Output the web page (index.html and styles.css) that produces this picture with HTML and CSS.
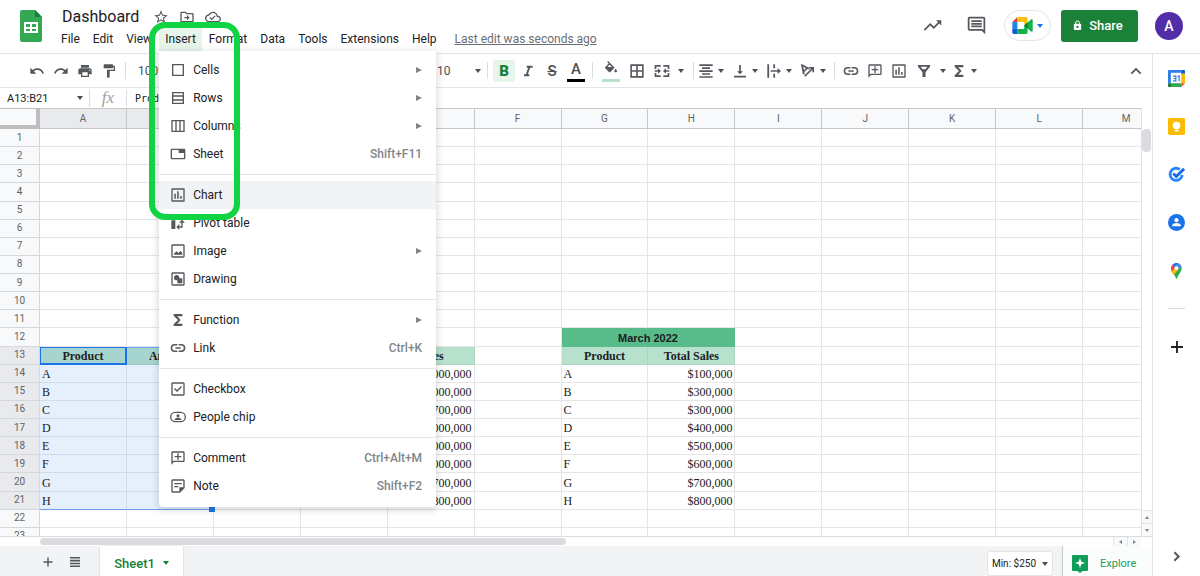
FILE: index.html
```html
<!DOCTYPE html>
<html lang="en">
<head>
<meta charset="utf-8">
<title>Dashboard</title>
<link rel="stylesheet" href="styles.css">
</head>
<body>
<svg class="sprite" aria-hidden="true">
  <symbol id="i-star" viewBox="0 0 24 24"><path d="M22 9.24l-7.19-.62L12 2 9.19 8.63 2 9.24l5.46 4.73L5.82 21 12 17.27 18.18 21l-1.63-7.03L22 9.24zM12 15.4l-3.76 2.27 1-4.28-3.32-2.88 4.38-.38L12 6.1l1.71 4.04 4.38.38-3.32 2.88 1 4.28L12 15.4z"/></symbol>
  <symbol id="i-folder" viewBox="0 0 24 24"><path d="M20 6h-8l-2-2H4c-1.100 0-2 .9-2 2v12c0 1.100.9 2 2 2h16c1.100 0 2-.9 2-2V8c0-1.100-.9-2-2-2zm0 12H4V6h5.200l2 2H20v10zm-8-1l4-4-4-4v3H8v2h4v3z"/></symbol>
  <symbol id="i-cloud" viewBox="0 0 24 24"><path d="M19.350 10.040C18.670 6.590 15.640 4 12 4 9.110 4 6.600 5.640 5.350 8.040 2.340 8.360 0 10.910 0 14c0 3.310 2.690 6 6 6h13c2.760 0 5-2.240 5-5 0-2.640-2.050-4.780-4.650-4.960zM19 18H6c-2.210 0-4-1.790-4-4 0-2.050 1.530-3.760 3.560-3.970l1.070-.11.5-.95C8.080 7.140 9.940 6 12 6c2.620 0 4.880 1.860 5.390 4.430l.3 1.500 1.530.11c1.560.1 2.780 1.410 2.780 2.960 0 1.650-1.350 3-3 3zm-9-3.820l-2.090-2.090L6.500 13.500 10 17l6.010-6.010-1.410-1.410z"/></symbol>
  <symbol id="i-trend" viewBox="0 0 24 24"><path d="M16 6l2.290 2.290-4.880 4.880-4-4L2 16.590 3.410 18l6-6 4 4 6.300-6.290L22 12V6z"/></symbol>
  <symbol id="i-chat" viewBox="0 0 24 24"><path d="M21.990 4c0-1.100-.89-2-1.990-2H4c-1.100 0-2 .9-2 2v12c0 1.100.9 2 2 2h14l4 4-.01-18zM20 4v13.170L18.830 16H4V4h16zM6 12h12v2H6zm0-3h12v2H6zm0-3h12v2H6z"/></symbol>
  <symbol id="i-lock" viewBox="0 0 24 24"><path d="M18 8h-1V6c0-2.760-2.240-5-5-5S7 3.240 7 6v2H6c-1.100 0-2 .9-2 2v10c0 1.100.9 2 2 2h12c1.100 0 2-.9 2-2V10c0-1.100-.9-2-2-2zM9 6c0-1.660 1.340-3 3-3s3 1.340 3 3v2H9V6zm3 11.500a2.500 2.500 0 1 1 0-5 2.500 2.500 0 0 1 0 5z"/></symbol>
  <symbol id="i-undo" viewBox="0 0 24 24"><path d="M12.500 8c-2.650 0-5.050.99-6.900 2.600L2 7v9h9l-3.620-3.620c1.390-1.160 3.160-1.880 5.120-1.880 3.540 0 6.550 2.310 7.600 5.500l2.370-.78C21.080 11.030 17.150 8 12.500 8z"/></symbol>
  <symbol id="i-redo" viewBox="0 0 24 24"><path d="M18.400 10.600C16.550 8.990 14.150 8 11.500 8c-4.650 0-8.580 3.030-9.960 7.220L3.900 16c1.050-3.190 4.050-5.500 7.600-5.500 1.950 0 3.730.72 5.120 1.880L13 16h9V7l-3.600 3.600z"/></symbol>
  <symbol id="i-print" viewBox="0 0 24 24"><path d="M19 8H5c-1.660 0-3 1.340-3 3v6h4v4h12v-4h4v-6c0-1.660-1.340-3-3-3zm-3 11H8v-5h8v5zm3-7c-.55 0-1-.45-1-1s.45-1 1-1 1 .45 1 1-.45 1-1 1zm-1-9H6v4h12V3z"/></symbol>
  <symbol id="i-paint" viewBox="0 0 24 24"><path d="M18 4V3c0-.55-.45-1-1-1H5c-.55 0-1 .45-1 1v4c0 .55.45 1 1 1h12c.55 0 1-.45 1-1V6h1v4H9v11c0 .55.45 1 1 1h2c.55 0 1-.45 1-1v-9h8V4h-3z"/></symbol>
  <symbol id="i-italic" viewBox="0 0 24 24"><path d="M10 4v3h2.210l-3.420 10H6v3h8v-3h-2.210l3.420-10H19V4z"/></symbol>
  <symbol id="i-fill" viewBox="0 0 24 24"><path d="M16.560 8.940L7.620 0 6.210 1.410l2.380 2.380-5.150 5.150a1.490 1.490 0 0 0 0 2.120l5.500 5.500c.29.29.68.44 1.060.44s.77-.15 1.060-.44l5.500-5.500c.59-.58.59-1.530 0-2.120zM6.500 9L10 5.500 13.500 9zM19 11.500s-2 2.170-2 3.500c0 1.100.9 2 2 2s2-.9 2-2c0-1.330-2-3.500-2-3.500z"/></symbol>
  <symbol id="i-borders" viewBox="0 0 24 24"><path fill-rule="evenodd" d="M2 2v20h20V2zm8.800 17.600H4.400v-6.400h6.400zm0-8.800H4.400V4.400h6.400zm8.800 8.800h-6.400v-6.400h6.400zm0-8.800h-6.400V4.400h6.400z"/></symbol>
  <symbol id="i-merge" viewBox="0 0 24 24"><path d="M1 3h9v2.500H3.500V9H1zM14 3h9v6h-2.500V5.500H14zM1 15h2.500v3.500H10V21H1zM20.500 15H23v6h-9v-2.500h6.500zM1 10.800h5V8l4.500 4L6 16v-2.800H1zM23 10.800h-5V8l-4.500 4 4.500 4v-2.800h5z"/></symbol>
  <symbol id="i-center" viewBox="0 0 24 24"><path d="M2 2h20v2.500H2zM6 6.500h12V9H6zM2 11h20v2.500H2zM6 15.300h12v2.500H6zM2 19.700h20v2.500H2z"/></symbol>
  <symbol id="i-bottom" viewBox="0 0 24 24"><path d="M16.500 12.500h-3.200V3h-2.600v9.500H7.500L12 17zM3 19v2.600h18V19z"/></symbol>
  <symbol id="i-wrap" viewBox="0 0 24 24"><path d="M2 2h2.700v20H2zM11 2h2.600v6H11zM11 16h2.600v6H11zM7 10.700h10.500V7.500L22.500 12l-5 4.500v-3.200H7z"/></symbol>
  <symbol id="i-rotate" viewBox="0 0 24 24"><path fill-rule="evenodd" d="M1.500 2l2.800 15h2.800l-.6-3.400 4.700-4.700 3 1.300 1.700-1.700L3.500 2zM4.800 5.200l4 2.500L6 10.700zM8 20.500L18.500 10v4H21V6h-8v2.500h4L6.300 18.900z"/></symbol>
  <symbol id="i-link" viewBox="0 0 24 24"><path d="M3.300 12c0-2 1.600-3.700 3.700-3.700h4V6H7a6 6 0 0 0 0 12h4v-2.300H7c-2.100 0-3.700-1.700-3.700-3.700zM8 13.200h8v-2.400H8zM17 6h-4v2.300h4a3.700 3.700 0 0 1 0 7.400h-4V18h4a6 6 0 0 0 0-12z"/></symbol>
  <symbol id="i-comment" viewBox="0 0 24 24"><path d="M20 2H4c-1.100 0-2 .9-2 2v18l4-4h14c1.100 0 2-.9 2-2V4c0-1.100-.9-2-2-2zm0 14H5.200L4 17.200V4h16v12zm-9-1h2v-4h4V9h-4V5h-2v4H7v2h4z"/></symbol>
  <symbol id="i-chart" viewBox="0 0 24 24"><path d="M21 2H3c-.6 0-1 .4-1 1v18c0 .6.4 1 1 1h18c.6 0 1-.4 1-1V3c0-.6-.4-1-1-1zm-1 18H4V4h16v16zM6.500 10h2.300v7.500H6.500zM10.800 6.500h2.300v11h-2.300zM15.200 13.500h2.300v4h-2.300z"/></symbol>
  <symbol id="i-filter" viewBox="0 0 24 24"><path fill-rule="evenodd" d="M3 3h18v2.500L14.300 14v7H9.700v-7L3 5.500zM7 5.500l3 4h4l3-4z"/></symbol>
  <symbol id="i-sigma" viewBox="0 0 24 24"><path d="M18.500 3H5.500v2.600L12 12l-6.500 6.400V21h13v-3.400H10.800L16 12l-5.200-5.600h7.700z"/></symbol>
  <symbol id="i-up" viewBox="0 0 24 24"><path d="M12 7l-8 8 2 2 6-6 6 6 2-2z"/></symbol>
  <symbol id="i-right" viewBox="0 0 24 24"><path d="M10 5L8 7l5 5-5 5 2 2 7-7z"/></symbol>
  <symbol id="i-plus" viewBox="0 0 24 24"><path d="M21 13.400h-7.600V21h-2.800v-7.600H3v-2.800h7.600V3h2.800v7.600H21z"/></symbol>
  <symbol id="i-list" viewBox="0 0 24 24"><path d="M2 2h20v3.200H2zM2 7.700h20v3.200H2zM2 13.400h20v3.200H2zM2 19h20v3.200H2z"/></symbol>
  <symbol id="i-cells" viewBox="0 0 24 24"><path d="M3 3v18h18V3H3zm16 16H5V5h14z"/></symbol>
  <symbol id="i-rows" viewBox="0 0 24 24"><path d="M3 3v18h18V3H3zm16 16H5v-3h14v3zm0-5H5v-4h14v4zm0-6H5V5h14v3z"/></symbol>
  <symbol id="i-cols" viewBox="0 0 24 24"><path d="M2 3v18h20V3H2zm2 16V5h4v14H4zm6 0V5h4v14h-4zm10 0h-4V5h4v14z"/></symbol>
  <symbol id="i-sheet" viewBox="0 0 24 24"><path d="M21 4H3c-1.100 0-2 .9-2 2v12c0 1.100.9 2 2 2h18c1.100 0 2-.9 2-2V6c0-1.100-.9-2-2-2zm0 14H3V6h10v4.500h8z"/></symbol>
  <symbol id="i-pivot" viewBox="0 0 24 24"><path d="M2 8h6v13H2zM2 2h6v4H2zM10 2h12v4H10zM18 7l-4.500 4.500H17V17h-3v-3.500L9.500 18l4.500 4.500V19h5v-7.500h3.500z"/></symbol>
  <symbol id="i-image" viewBox="0 0 24 24"><path d="M20 2H4c-1.100 0-2 .9-2 2v16c0 1.100.9 2 2 2h16c1.100 0 2-.9 2-2V4c0-1.100-.9-2-2-2zm0 18H4V4h16v16zM6 17.500h12.500V15l-3-3.500-2.500 3.500-3.500-2.500L6 16z"/></symbol>
  <symbol id="i-drawing" viewBox="0 0 24 24"><path d="M20 2H4c-1.100 0-2 .9-2 2v16c0 1.100.9 2 2 2h16c1.100 0 2-.9 2-2V4c0-1.100-.9-2-2-2zm0 18H4V4h16v16zM10 6a4 4 0 1 0 0 8h1v4.500h7.500V11H14v-1a4 4 0 0 0-4-4z"/></symbol>
  <symbol id="i-check" viewBox="0 0 24 24"><path d="M20 2H4c-1.100 0-2 .9-2 2v16c0 1.100.9 2 2 2h16c1.100 0 2-.9 2-2V4c0-1.100-.9-2-2-2zm0 18H4V4h16v16zM18 9l-1.500-1.500-6 6-3-3L6 12l4.500 4.500z"/></symbol>
  <symbol id="i-people" viewBox="0 0 24 24"><path fill-rule="evenodd" d="M8 4h8a8 8 0 0 1 0 16H8A8 8 0 0 1 8 4zm0 2a6 6 0 0 0 0 12h8a6 6 0 0 0 0-12z"/><circle cx="12" cy="10" r="2.300"/><path d="M7 16.500v-1c0-1.600 3-2.500 5-2.500s5 .9 5 2.500v1z"/></symbol>
  <symbol id="i-note" viewBox="0 0 24 24"><path d="M20 2H4c-1.100 0-2 .9-2 2v16c0 1.100.9 2 2 2h11l7-7V4c0-1.100-.9-2-2-2zm0 12h-6v6H4V4h16zM6.500 7.500h11v2h-11zM6.500 12h6v2h-6z"/></symbol>
</svg>

<div class="app">
  <header class="top">
    <svg class="logo" viewBox="0 0 22 32"><path fill="#34a853" d="M2 0h13l7 7v23a2 2 0 0 1-2 2H2a2 2 0 0 1-2-2V2a2 2 0 0 1 2-2z"/><path fill="#188038" d="M15 0l7 7h-7z"/><path fill="#fff" fill-rule="evenodd" d="M4 12h14v11H4zm2 2v3h4v-3zm6 0v3h4v-3zm-6 5v2h4v-2zm6 0v2h4v-2z"/></svg>
    <div class="doc">
      <div class="title-row">
        <h1 class="title">Dashboard</h1>
        <button class="mini" aria-label="Star"><svg><use href="#i-star"/></svg></button>
        <button class="mini" aria-label="Move"><svg><use href="#i-folder"/></svg></button>
        <button class="mini" aria-label="Saved to Drive"><svg><use href="#i-cloud"/></svg></button>
      </div>
      <nav class="menubar">
        <button>File</button>
        <button>Edit</button>
        <button>View</button>
        <div class="menu-anchor">
          <button class="open">Insert</button>
          <div class="menu" role="menu">
            <button class="item"><svg><use href="#i-cells"/></svg><span>Cells</span><i class="sub"></i></button>
            <button class="item"><svg><use href="#i-rows"/></svg><span>Rows</span><i class="sub"></i></button>
            <button class="item"><svg><use href="#i-cols"/></svg><span>Columns</span><i class="sub"></i></button>
            <button class="item"><svg><use href="#i-sheet"/></svg><span>Sheet</span><kbd>Shift+F11</kbd></button>
            <hr>
            <button class="item current"><svg><use href="#i-chart"/></svg><span>Chart</span></button>
            <button class="item"><svg><use href="#i-pivot"/></svg><span>Pivot table</span></button>
            <button class="item"><svg><use href="#i-image"/></svg><span>Image</span><i class="sub"></i></button>
            <button class="item"><svg><use href="#i-drawing"/></svg><span>Drawing</span></button>
            <hr>
            <button class="item"><svg><use href="#i-sigma"/></svg><span>Function</span><i class="sub"></i></button>
            <button class="item"><svg><use href="#i-link"/></svg><span>Link</span><kbd>Ctrl+K</kbd></button>
            <hr>
            <button class="item"><svg><use href="#i-check"/></svg><span>Checkbox</span></button>
            <button class="item"><svg><use href="#i-people"/></svg><span>People chip</span></button>
            <hr>
            <button class="item"><svg><use href="#i-comment"/></svg><span>Comment</span><kbd>Ctrl+Alt+M</kbd></button>
            <button class="item"><svg><use href="#i-note"/></svg><span>Note</span><kbd>Shift+F2</kbd></button>
          </div>
          <div class="highlight"></div>
        </div>
        <button>Format</button>
        <button>Data</button>
        <button>Tools</button>
        <button>Extensions</button>
        <button>Help</button>
        <a class="last-edit" href="#">Last edit was seconds ago</a>
      </nav>
    </div>
    <div class="actions">
      <button class="round" aria-label="Activity"><svg><use href="#i-trend"/></svg></button>
      <button class="round" aria-label="Comments"><svg><use href="#i-chat"/></svg></button>
      <button class="meet" aria-label="Meet">
        <svg viewBox="0 0 24 20"><path fill="#1e88e5" d="M0 6h6v8H0z"/><path fill="#e53935" d="M6 0v6H0z"/><path fill="#0d5bd1" d="M0 14h6v6H2a2 2 0 0 1-2-2z"/><path fill="#ffc107" d="M6 0h10a2 2 0 0 1 2 2v8l-4-1V6H6z"/><path fill="#12b24a" d="M6 14h8v-4h4v8a2 2 0 0 1-2 2H6z"/><path fill="#12b24a" d="M14 10l8-7c.800-.6 2-.2 2 .8v12.400c0 1-1.200 1.400-2 .8z"/><path fill="#087a35" d="M14 10l4-3.500v7z"/></svg>
        <i class="caret blue"></i>
      </button>
      <button class="share"><svg><use href="#i-lock"/></svg>Share</button>
      <button class="avatar">A</button>
    </div>
  </header>

  <div class="body">
    <main class="work">
      <div class="toolbar">
        <button class="tool" aria-label="Undo"><svg><use href="#i-undo"/></svg></button>
        <button class="tool" aria-label="Redo"><svg><use href="#i-redo"/></svg></button>
        <button class="tool" aria-label="Print"><svg><use href="#i-print"/></svg></button>
        <button class="tool" aria-label="Paint format"><svg><use href="#i-paint"/></svg></button>
        <span class="sep"></span>
        <label class="pick zoom"><select aria-label="Zoom"><option>100%</option></select><i class="caret"></i></label>
        <span class="sep"></span>
        <label class="pick family"><select aria-label="Font"><option>Default</option></select><i class="caret"></i></label>
        <label class="pick size"><select aria-label="Font size"><option>10</option></select><i class="caret"></i></label>
        <span class="sep"></span>
        <button class="tool bold">B</button>
        <button class="tool" aria-label="Italic"><svg><use href="#i-italic"/></svg></button>
        <button class="tool letter"><s>S</s></button>
        <button class="tool letter bar">A</button>
        <span class="sep"></span>
        <button class="tool bar mint" aria-label="Fill color"><svg><use href="#i-fill"/></svg></button>
        <button class="tool" aria-label="Borders"><svg><use href="#i-borders"/></svg></button>
        <button class="tool wide" aria-label="Merge"><svg><use href="#i-merge"/></svg><i class="caret"></i></button>
        <span class="sep"></span>
        <button class="tool drop" aria-label="Horizontal align"><svg><use href="#i-center"/></svg><i class="caret"></i></button>
        <button class="tool drop" aria-label="Vertical align"><svg><use href="#i-bottom"/></svg><i class="caret"></i></button>
        <button class="tool drop" aria-label="Text wrapping"><svg><use href="#i-wrap"/></svg><i class="caret"></i></button>
        <button class="tool drop" aria-label="Text rotation"><svg><use href="#i-rotate"/></svg><i class="caret"></i></button>
        <span class="sep"></span>
        <button class="tool" aria-label="Insert link"><svg><use href="#i-link"/></svg></button>
        <button class="tool" aria-label="Insert comment"><svg><use href="#i-comment"/></svg></button>
        <button class="tool" aria-label="Insert chart"><svg><use href="#i-chart"/></svg></button>
        <button class="tool wide" aria-label="Filter"><svg><use href="#i-filter"/></svg><i class="caret"></i></button>
        <button class="tool drop" aria-label="Functions"><svg><use href="#i-sigma"/></svg><i class="caret"></i></button>
        <button class="tool end" aria-label="Hide the menus"><svg><use href="#i-up"/></svg></button>
      </div>

      <div class="formula">
        <label class="name"><input aria-label="Name box" value="A13:B21"><i class="caret"></i></label>
        <span class="fx">fx</span>
        <input class="expr" aria-label="Formula" value="Product">
      </div>

      <div class="sheet">
        <div class="view"><table class="grid"><thead></thead><tbody></tbody></table></div>
        <div class="vbar">
          <div class="thumb"></div>
          <button aria-label="Scroll up"><i class="tri up"></i></button>
          <button aria-label="Scroll down"><i class="tri down"></i></button>
        </div>
      </div>
      <div class="hbar">
        <div class="track"><div class="thumb"></div></div>
        <button aria-label="Scroll left"><i class="tri left"></i></button>
        <button aria-label="Scroll right"><i class="tri right"></i></button>
      </div>

      <footer class="tabs">
        <button class="tool" aria-label="Add sheet"><svg><use href="#i-plus"/></svg></button>
        <button class="tool" aria-label="All sheets"><svg><use href="#i-list"/></svg></button>
        <button class="tab">Sheet1<i class="caret green"></i></button>
        <button class="stat">Min: $250<i class="caret"></i></button>
        <button class="explore"><svg viewBox="0 0 16 18"><path fill="#0f9d58" d="M1 0h14a1 1 0 0 1 1 1v14a1 1 0 0 1-1 1h-4.500L8 18l-2.500-2H1a1 1 0 0 1-1-1V1a1 1 0 0 1 1-1z"/><path fill="#fff" d="M8 3l1.300 3.700L13 8 9.300 9.300 8 13 6.700 9.300 3 8l3.700-1.300z"/></svg>Explore</button>
      </footer>
    </main>

    <aside class="side">
      <button aria-label="Calendar"><svg viewBox="0 0 18 18"><path fill="#fff" d="M3 3h12v12H3z"/><path fill="#2f7de9" d="M1 0h13v3H3v11H0V1a1 1 0 0 1 1-1z"/><path fill="#1557c0" d="M14 0h3a1 1 0 0 1 1 1v3h-4z"/><path fill="#fbbc04" d="M14 4h4v10h-4z"/><path fill="#34a853" d="M4 14h10v4H4z"/><path fill="#188038" d="M0 14h4v4H1a1 1 0 0 1-1-1z"/><path fill="#ea4335" d="M14 14h4l-4 4z"/><path fill="none" stroke="#2f7de9" stroke-width="1.300" d="M5.300 6.600h3v5h-3M6 9h2.300M10 7.200l1.800-.8V12"/></svg></button>
      <button aria-label="Keep"><svg viewBox="0 0 18 18"><rect width="18" height="18" rx="1.500" fill="#fbbc04"/><circle cx="9" cy="8" r="4" fill="#fff"/><path fill="#fff" d="M7 10h4v2H7zM7 12.800h4v1.400H7z"/></svg></button>
      <button aria-label="Tasks"><svg viewBox="0 0 18 18"><path fill="none" stroke="#2684fc" stroke-width="3" d="M12.500 3.700A6.400 6.400 0 1 0 15 9.500"/><path fill="none" stroke="#1a6be0" stroke-width="3" d="M5.500 8l3.300 3.200L17 3"/></svg></button>
      <button aria-label="Contacts"><svg viewBox="0 0 18 18"><circle cx="9" cy="9" r="9" fill="#1a73e8"/><circle cx="9" cy="6.500" r="2.200" fill="#fff"/><path fill="#fff" d="M4.500 13v-1c0-1.600 2.800-2.400 4.500-2.400s4.500.8 4.500 2.400v1z"/></svg></button>
      <button aria-label="Maps"><svg viewBox="0 0 18 18"><path fill="#34a853" d="M3.500 10L14 4.500C16 9 11.500 12 9.500 17.500c-.2.600-.8.600-1 0C7.500 14 5 12 3.500 10z"/><path fill="#fbbc04" d="M4 10.500L9 5l2 3-4.800 5.500C5.400 12.500 4.500 11.500 4 10.500z"/><path fill="#ea4335" d="M4.600 3L8 6l-4.200 4C2.700 7.500 3 5 4.600 3z"/><path fill="#1a73e8" d="M4.600 3C6 1 9 .5 11 1.300L7.500 5.500z"/><path fill="#4285f4" d="M11 1.300c1.500.6 2.600 1.800 3.200 3.400L10 8 8 4.800z"/><circle cx="9" cy="6.500" r="2" fill="#fff"/></svg></button>
      <hr>
      <button class="add" aria-label="Get add-ons"><svg><use href="#i-plus"/></svg></button>
      <button class="hide" aria-label="Hide side panel"><svg><use href="#i-right"/></svg></button>
    </aside>
  </div>
</div>
<script src="script.js"></script>
</body>
</html>
```

FILE: styles.css
```css
* { box-sizing: border-box; }
body {
  margin: 0;
  font-family: Roboto, "Liberation Sans", sans-serif;
  font-size: 12px;
  color: #202124;
  background: #fff;
}
button, input, select {
  font: inherit;
  color: inherit;
  border: 0;
  padding: 0;
  margin: 0;
  background: none;
}
svg { display: block; flex: none; fill: #54585d; }
.sprite { position: absolute; width: 0; height: 0; }
.app { display: flex; flex-direction: column; height: 100vh; overflow: hidden; }

/* Header */
.top {
  display: flex;
  flex: none;
  height: 54px;
  padding: 0 17px 0 20px;
  border-bottom: 1px solid #e3e5e8;
}
.logo { width: 22px; height: 32px; margin-top: 10px; }
.doc { margin-left: 13px; padding-top: 6px; }
.title-row { display: flex; align-items: center; height: 22px; padding-left: 7px; gap: 10px; }
.title { margin: 0 4px 0 0; font-size: 16px; font-weight: 400; line-height: 22px; }
.mini svg { width: 16px; height: 16px; }
.menubar { display: flex; gap: 1px; height: 23px; }
.menubar > button, .open { height: 23px; padding: 0 6px; line-height: 23px; white-space: nowrap; }
.menu-anchor { position: relative; }
.open { background: #e6f4ea; }
.last-edit { margin-left: 11px; line-height: 23px; color: #6b6f74; white-space: nowrap; }
.actions { display: flex; align-items: center; margin-left: auto; height: 51px; }
.round { width: 24px; height: 24px; margin-right: 20px; display: grid; place-items: center; }
.round + .round { margin-right: 16px; }
.round svg { width: 21px; height: 21px; }
.meet {
  display: flex;
  align-items: center;
  justify-content: center;
  gap: 4px;
  width: 47px;
  height: 31px;
  margin-right: 10px;
  border: 1px solid #e3e5e8;
  border-radius: 16px;
}
.meet svg { width: 21px; height: 17px; }
.share {
  display: flex;
  align-items: center;
  justify-content: center;
  gap: 6px;
  width: 77px;
  height: 32px;
  margin-right: 17px;
  padding-right: 4px;
  border-radius: 3px;
  background: #1b8138;
  color: #fff;
  font-size: 13px;
  font-weight: 500;
}
.share svg { width: 11px; height: 11px; fill: #fff; }
.avatar { width: 28px; height: 28px; border-radius: 50%; background: #512da8; color: #fff; font-size: 14px; font-weight: 500; }

/* Small triangles */
.caret { flex: none; width: 0; height: 0; border: 3px solid transparent; border-top: 4px solid #4b4f54; border-bottom: 0; }
.caret.blue { border-top-color: #1a73e8; }
.caret.green { border-top-color: #188038; }

/* Insert menu */
.menu {
  position: absolute;
  z-index: 10;
  top: 100%;
  left: 0;
  width: 277px;
  padding: 5px 0 7px;
  background: #fff;
  border-radius: 0 0 4px 4px;
  box-shadow: 0 2px 6px 2px rgba(60, 64, 67, .16);
}
.item { display: flex; align-items: center; width: 100%; height: 28px; padding: 0 14px 0 11px; text-align: left; }
.item.current { background: #f1f3f4; }
.item svg { width: 16px; height: 16px; margin-right: 7px; }
.item kbd { margin-left: auto; font: inherit; font-weight: 500; color: #80868b; }
.sub { width: 0; height: 0; margin-left: auto; border: 3px solid transparent; border-left: 6px solid #80868b; border-right: 0; }
.menu hr { height: 1px; margin: 6px 0; border: 0; background: #e3e5e8; }
.highlight {
  position: absolute;
  z-index: 11;
  top: -6px;
  left: -10px;
  width: 91px;
  height: 198px;
  border: 6px solid #10d443;
  border-radius: 16px;
  pointer-events: none;
}

/* Toolbar */
.body { display: flex; flex: 1; min-height: 0; }
.work { display: flex; flex: 1; flex-direction: column; min-width: 0; }
.toolbar {
  display: flex;
  flex: none;
  align-items: center;
  height: 34px;
  padding: 0 4px 0 25px;
  border-bottom: 1px solid #e3e5e8;
}
.tool { display: flex; flex: none; align-items: center; justify-content: center; width: 24px; height: 22px; }
.tool svg { width: 16px; height: 16px; }
.tool.wide { width: 40px; gap: 8px; }
.tool.drop { justify-content: flex-start; width: 34px; gap: 4px; }
.drop + .sep { margin-left: 0; }
.tool.bold { width: 22px; margin: 0 1px; border-radius: 2px; background: #e6f4ea; color: #188038; font-size: 15px; font-weight: 900; }
.tool.letter { font-size: 15px; font-weight: 500; color: #4b4f54; }
.tool.bar { width: 18px; margin: 0 3px; border-bottom: 3px solid #000; }
.tool.bar.mint { margin: 0 5px; border-bottom-color: #b7e1cd; }
.tool.end { margin-left: auto; }
.sep { flex: none; width: 1px; height: 17px; margin: 0 4px; background: #dadce0; }
.pick { display: flex; flex: none; align-items: center; color: #4b4f54; }
.pick select { flex: 1; min-width: 0; appearance: none; }
.pick.zoom { width: 60px; margin-left: 8px; }
.pick.family { width: 224px; }
.pick.size { width: 44px; margin: 0 2px 0 6px; }

/* Formula bar */
.formula { display: flex; flex: none; align-items: center; height: 20px; font-size: 11px; }
.name { display: flex; align-items: center; width: 90px; height: 18px; padding: 0 6px 0 7px; border-right: 1px solid #dadce0; }
.name input { flex: 1; min-width: 0; }
.fx { width: 37px; border-right: 1px solid #dadce0; font: italic 17px/16px "Liberation Serif", serif; color: #9aa0a6; text-align: center; }
.expr { flex: 1; padding-left: 8px; font-family: "DejaVu Sans Mono", monospace; font-size: 10px; }

/* Grid */
.sheet { display: flex; flex: 1; min-height: 0; }
.view { flex: 1; overflow: hidden; }
.grid { width: 1170px; height: 456px; table-layout: fixed; border-collapse: separate; border-spacing: 0; }
.grid th, .grid td { padding: 0 2px; line-height: 16px; overflow: hidden; white-space: nowrap; }
.grid thead th {
  height: 21px;
  border: solid #c6c8ca;
  border-width: 1px 1px 1px 0;
  background: #f8f9fa;
  font-size: 10px;
  font-weight: 400;
  color: #5f6368;
}
.grid thead .corner { width: 40px; border: solid #bdbdbd; border-width: 1px 4px 4px 0; }
.grid tbody th { border: solid #d5d7d9; border-width: 0 1px 1px 0; background: #f8f9fa; font-size: 10px; font-weight: 400; color: #5f6368; }
.grid thead .on, .grid tbody th.on { background: #e8eaed; }
.grid td {
  border: solid #e4e5e6;
  border-width: 0 1px 1px 0;
  font-family: "Liberation Serif", serif;
  font-size: 12px;
  vertical-align: bottom;
}
.grid .num { text-align: right; }
.grid .label { background: #b7e1cd; border-color: #a8d8c0; text-align: center; font-weight: 700; }
.grid .month { background: #57bb8a; border-color: #57bb8a; text-align: center; font: 700 11px/16px "Liberation Sans", sans-serif; }
.grid .sel { background: #e6f0fd; border-color: #cfdbea; }
.grid .sel.label { background: #a6d5cf; border-color: #98c8c3; box-shadow: inset 0 1px #6ba4e8; }
.grid .sel.active { box-shadow: inset 0 0 0 1px #1a73e8; border-color: #1a73e8; }
.grid .sel.last { border-bottom-color: #6ba0f0; }
.grid .sel.grip { position: relative; overflow: visible; }
.grip::after { content: ""; position: absolute; right: -2px; bottom: -3px; width: 6px; height: 5px; background: #1a73e8; }

/* Scroll bars */
.vbar { display: flex; flex-direction: column; width: 11px; padding-top: 21px; border-left: 1px solid #e0e0e0; }
.vbar .thumb { height: 23px; margin: 0 1px auto 0; border-radius: 4px; background: #dadce0; }
.vbar button, .hbar button { display: grid; flex: none; place-items: center; width: 14px; height: 13px; border: solid #e4e5e6; border-width: 1px 0 0 1px; background: #f8f9fa; }
.vbar button { width: 10px; border-left: 0; }
.hbar { display: flex; flex: none; height: 10px; padding: 0 11px 0 40px; border-top: 1px solid #dadce0; }
.hbar .track { flex: 1; }
.hbar .thumb { width: 49%; height: 7px; margin-top: 1px; border-radius: 4px; background: #dadce0; }
.hbar button { height: 9px; border-top: 0; }
.tri { width: 0; height: 0; border: 2px solid transparent; }
.tri.up { border-bottom: 3px solid #80868b; border-top: 0; }
.tri.down { border-top: 3px solid #80868b; border-bottom: 0; }
.tri.left { border-right: 3px solid #80868b; border-left: 0; }
.tri.right { border-left: 3px solid #80868b; border-right: 0; }

/* Sheet tabs */
.tabs { display: flex; flex: none; height: 30px; padding-left: 34px; background: #f1f3f4; }
.tabs > .tool { width: 27px; height: 32px; }
.tabs > .tool svg { width: 12px; height: 12px; }
.tab {
  display: flex;
  align-items: center;
  justify-content: center;
  gap: 8px;
  width: 83px;
  height: 34px;
  margin-left: 12px;
  background: #fff;
  box-shadow: 0 0 2px rgba(60, 64, 67, .25);
  color: #188038;
  font-size: 13px;
  font-weight: 500;
}
.stat {
  display: flex;
  align-items: center;
  justify-content: center;
  gap: 6px;
  width: 66px;
  height: 25px;
  margin: 5px 9px 0 auto;
  border: 1px solid #e3e5e8;
  border-radius: 3px;
  background: #fff;
  font-size: 10px;
}
.explore {
  display: flex;
  align-items: center;
  gap: 12px;
  width: 90px;
  height: 35px;
  padding-left: 9px;
  border-left: 1px solid #c6c8ca;
  background: #fbfdfc;
  color: #1e9e55;
  font-size: 11px;
}
.explore svg { width: 16px; height: 18px; }

/* Side panel */
.side {
  display: flex;
  flex: none;
  flex-direction: column;
  align-items: center;
  width: 48px;
  border-left: 1px solid #e3e5e8;
}
.side button { display: grid; place-items: center; width: 47px; height: 48px; flex: none; }
.side svg { width: 17px; height: 17px; }
.side .add svg { width: 16px; height: 16px; fill: #202124; }
.side hr { width: 17px; height: 1px; margin: 14px 0; border: 0; background: #dadce0; }
.side .hide { height: 40px; margin-top: auto; }
```

FILE: script.js
```js
const letters = "ABCDEFGHIJKLM".split("");
const rowCount = 24;
const products = "ABCDEFGH".split("");
const totalSales = ["$1,000,000", "$3,000,000", "$700,000", "$4,000,000", "$5,000,000", "$6,000,000", "$700,000", "$800,000"];
const marchSales = ["$100,000", "$300,000", "$300,000", "$400,000", "$500,000", "$600,000", "$700,000", "$800,000"];

function contentOf(col, row) {
  if (row === 13) {
    const text = { A: "Product", B: "Amount", D: "Product", E: "Sales", G: "Product", H: "Total Sales" }[col];
    return text ? [text, "label"] : ["", ""];
  }
  if (row < 14 || row > 21) return ["", ""];
  const i = row - 14;
  if (col === "A" || col === "G") return [products[i], ""];
  if (col === "E") return [totalSales[i], "num"];
  if (col === "H") return [marchSales[i], "num"];
  return ["", ""];
}

function selectionClass(col, row) {
  if (!"AB".includes(col) || row < 13 || row > 21) return "";
  let name = "sel";
  if (col === "A" && row === 13) name += " active";
  if (row === 21) name += " last";
  if (col === "B" && row === 21) name += " grip";
  return name;
}

const head = letters.map(c => `<th class="${"AB".includes(c) ? "on" : ""}">${c}</th>`).join("");
document.querySelector(".grid thead").innerHTML = `<tr><th class="corner"></th>${head}</tr>`;

let rows = "";
for (let row = 1; row <= rowCount; row++) {
  rows += `<tr><th class="${row >= 13 && row <= 21 ? "on" : ""}">${row}</th>`;
  for (const col of letters) {
    if (row === 12 && col === "G") { rows += '<td class="month" colspan="2">March 2022</td>'; continue; }
    if (row === 12 && col === "H") continue;
    const [text, kind] = contentOf(col, row);
    rows += `<td class="${kind} ${selectionClass(col, row)}">${text}</td>`;
  }
  rows += "</tr>";
}
document.querySelector(".grid tbody").innerHTML = rows;
```
